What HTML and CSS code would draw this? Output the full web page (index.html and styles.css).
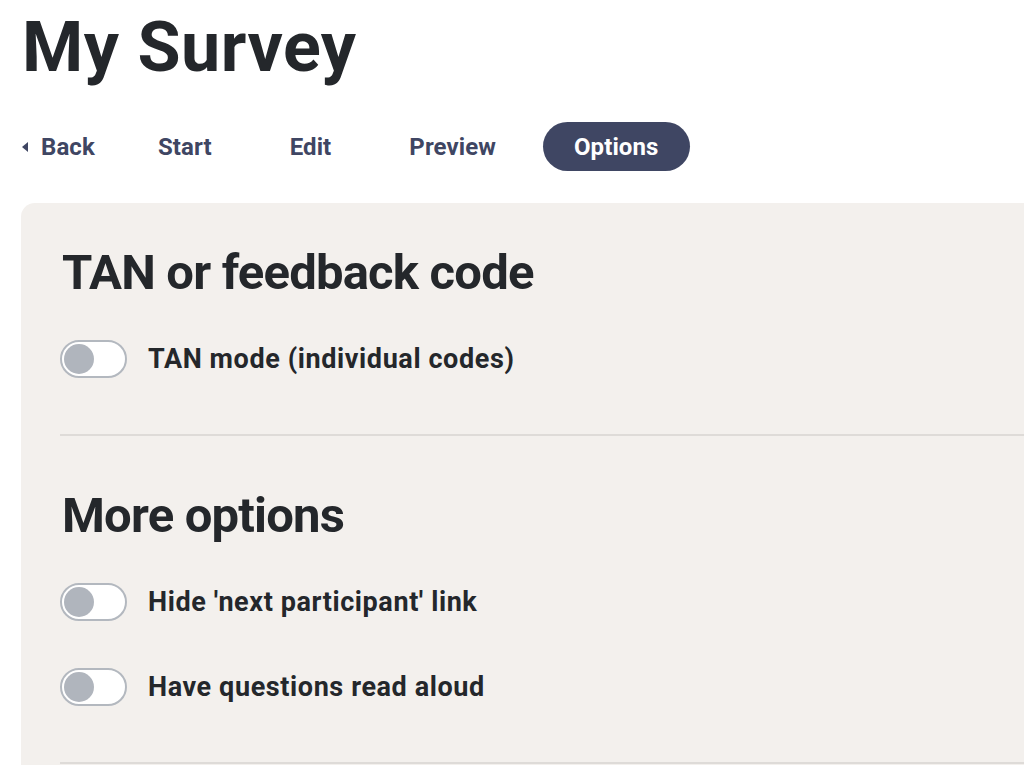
FILE: index.html
```html
<!DOCTYPE html>
<html lang="en">
<head>
<meta charset="utf-8">
<title>My Survey</title>
<link rel="stylesheet" href="styles.css">
</head>
<body>
<h1 class="title">My Survey</h1>
<nav class="tabs">
  <a class="tab tab-back" href="#"><span class="caret"></span>Back</a>
  <a class="tab" href="#">Start</a>
  <a class="tab" href="#">Edit</a>
  <a class="tab" href="#">Preview</a>
  <a class="tab tab-active" href="#">Options</a>
</nav>
<main class="panel">
  <section class="group">
    <h2 class="group-title">TAN or feedback code</h2>
    <label class="option"><span class="switch"><span class="knob"></span></span><span class="option-label">TAN mode (individual codes)</span></label>
  </section>
  <section class="group">
    <h2 class="group-title">More options</h2>
    <label class="option"><span class="switch"><span class="knob"></span></span><span class="option-label">Hide 'next participant' link</span></label>
    <label class="option"><span class="switch"><span class="knob"></span></span><span class="option-label">Have questions read aloud</span></label>
  </section>
</main>
</body>
</html>
```
FILE: styles.css
```css
html, body {
  margin: 0;
  padding: 0;
  background: #ffffff;
  overflow: hidden;
}
body {
  font-family: Roboto, "Liberation Sans", sans-serif;
  color: #24272b;
  width: 1024px;
  height: 765px;
}
.title {
  margin: 0;
  padding: 7px 0 0 22px;
  font-size: 70px;
  line-height: 80px;
  font-weight: 700;
  letter-spacing: 0.5px;
}
.tabs {
  display: flex;
  align-items: center;
  gap: 16px;
  margin-top: 35px;
  padding-left: 22px;
}
.tab {
  display: flex;
  align-items: center;
  height: 49px;
  padding: 0 31px;
  border-radius: 25px;
  font-size: 24px;
  font-weight: 700;
  color: #3f4663;
  text-decoration: none;
  letter-spacing: 0.1px;
}
.tab-back {
  padding: 0 16px 0 0;
}
.caret {
  width: 0;
  height: 0;
  border-top: 5px solid transparent;
  border-bottom: 5px solid transparent;
  border-right: 6px solid #3f4663;
  margin-right: 13px;
}
.tab-active {
  background: #3f4663;
  color: #ffffff;
}
.panel {
  margin: 32px 0 0 21px;
  background: #f3f0ed;
  border-radius: 14px 0 0 0;
  padding: 40px 0 0 39px;
  height: 522px;
  overflow: hidden;
}
.group {
  border-bottom: 2px solid #dedbd8;
  padding-bottom: 56px;
  margin-bottom: 50px;
}
.group-title {
  margin: 0 0 37px 2px;
  font-size: 49px;
  line-height: 60px;
  font-weight: 700;
  letter-spacing: -0.8px;
}
.option {
  display: flex;
  align-items: center;
  gap: 21px;
  height: 38px;
}
.option + .option {
  margin-top: 47px;
}
.switch {
  box-sizing: border-box;
  width: 67px;
  height: 38px;
  border: 2px solid #b3b8bf;
  border-radius: 19px;
  background: #ffffff;
  display: flex;
  align-items: center;
  padding-left: 2px;
}
.knob {
  width: 30px;
  height: 30px;
  border-radius: 50%;
  background: #b0b5bd;
}
.option-label {
  font-size: 27px;
  font-weight: 700;
  letter-spacing: 0.6px;
}
```
